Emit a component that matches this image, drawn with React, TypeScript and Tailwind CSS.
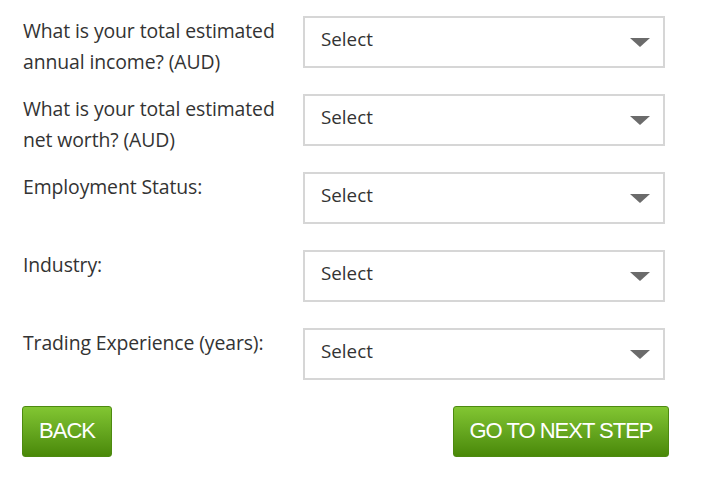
import React from "react";

const rows = [
  "What is your total estimated annual income? (AUD)",
  "What is your total estimated net worth? (AUD)",
  "Employment Status:",
  "Industry:",
  "Trading Experience (years):",
];

function Arrow() {
  return (
    <svg width="20" height="9" viewBox="0 0 20 9" className="block">
      <path d="M0 0 L20 0 L10 9 Z" fill="#6b6b6b" />
    </svg>
  );
}

export default function App() {
  return (
    <div className="bg-white w-[701px] h-[488px] pl-[23px] pt-[16px]" style={{ fontFamily: '"Open Sans", "Noto Sans", sans-serif' }}>
      <div className="flex flex-col gap-[26px] w-[642px]">
        {rows.map((r) => (
          <div key={r} className="flex h-[52px] items-start">
            <div className="w-[280px] -mt-[1px] pr-[6px] text-[19.4px] leading-[31px] text-[#333333] tracking-[-0.1px]">{r}</div>
            <div className="w-[362px] h-[52px] border-2 border-[#d6d6d6] flex items-center justify-between pl-[16px] pr-[13px]">
              <span className="text-[18.8px] text-[#333333] -mt-[6px]">Select</span>
              <Arrow />
            </div>
          </div>
        ))}
        <div className="flex justify-between w-[647px] -ml-[1px]">
          <button className="h-[51px] w-[90px] rounded-[3px] border border-[#4d8a10] bg-gradient-to-b from-[#82c632] to-[#4a8908] text-white text-[22px] tracking-[-1px] pb-[2px]" style={{ fontFamily: '"Liberation Sans", Arial, sans-serif' }}>
            BACK
          </button>
          <button className="h-[51px] w-[216px] rounded-[3px] border border-[#4d8a10] bg-gradient-to-b from-[#82c632] to-[#4a8908] text-white text-[22px] tracking-[-1px] pb-[2px]" style={{ fontFamily: '"Liberation Sans", Arial, sans-serif' }}>
            GO TO NEXT STEP
          </button>
        </div>
      </div>
    </div>
  );
}
